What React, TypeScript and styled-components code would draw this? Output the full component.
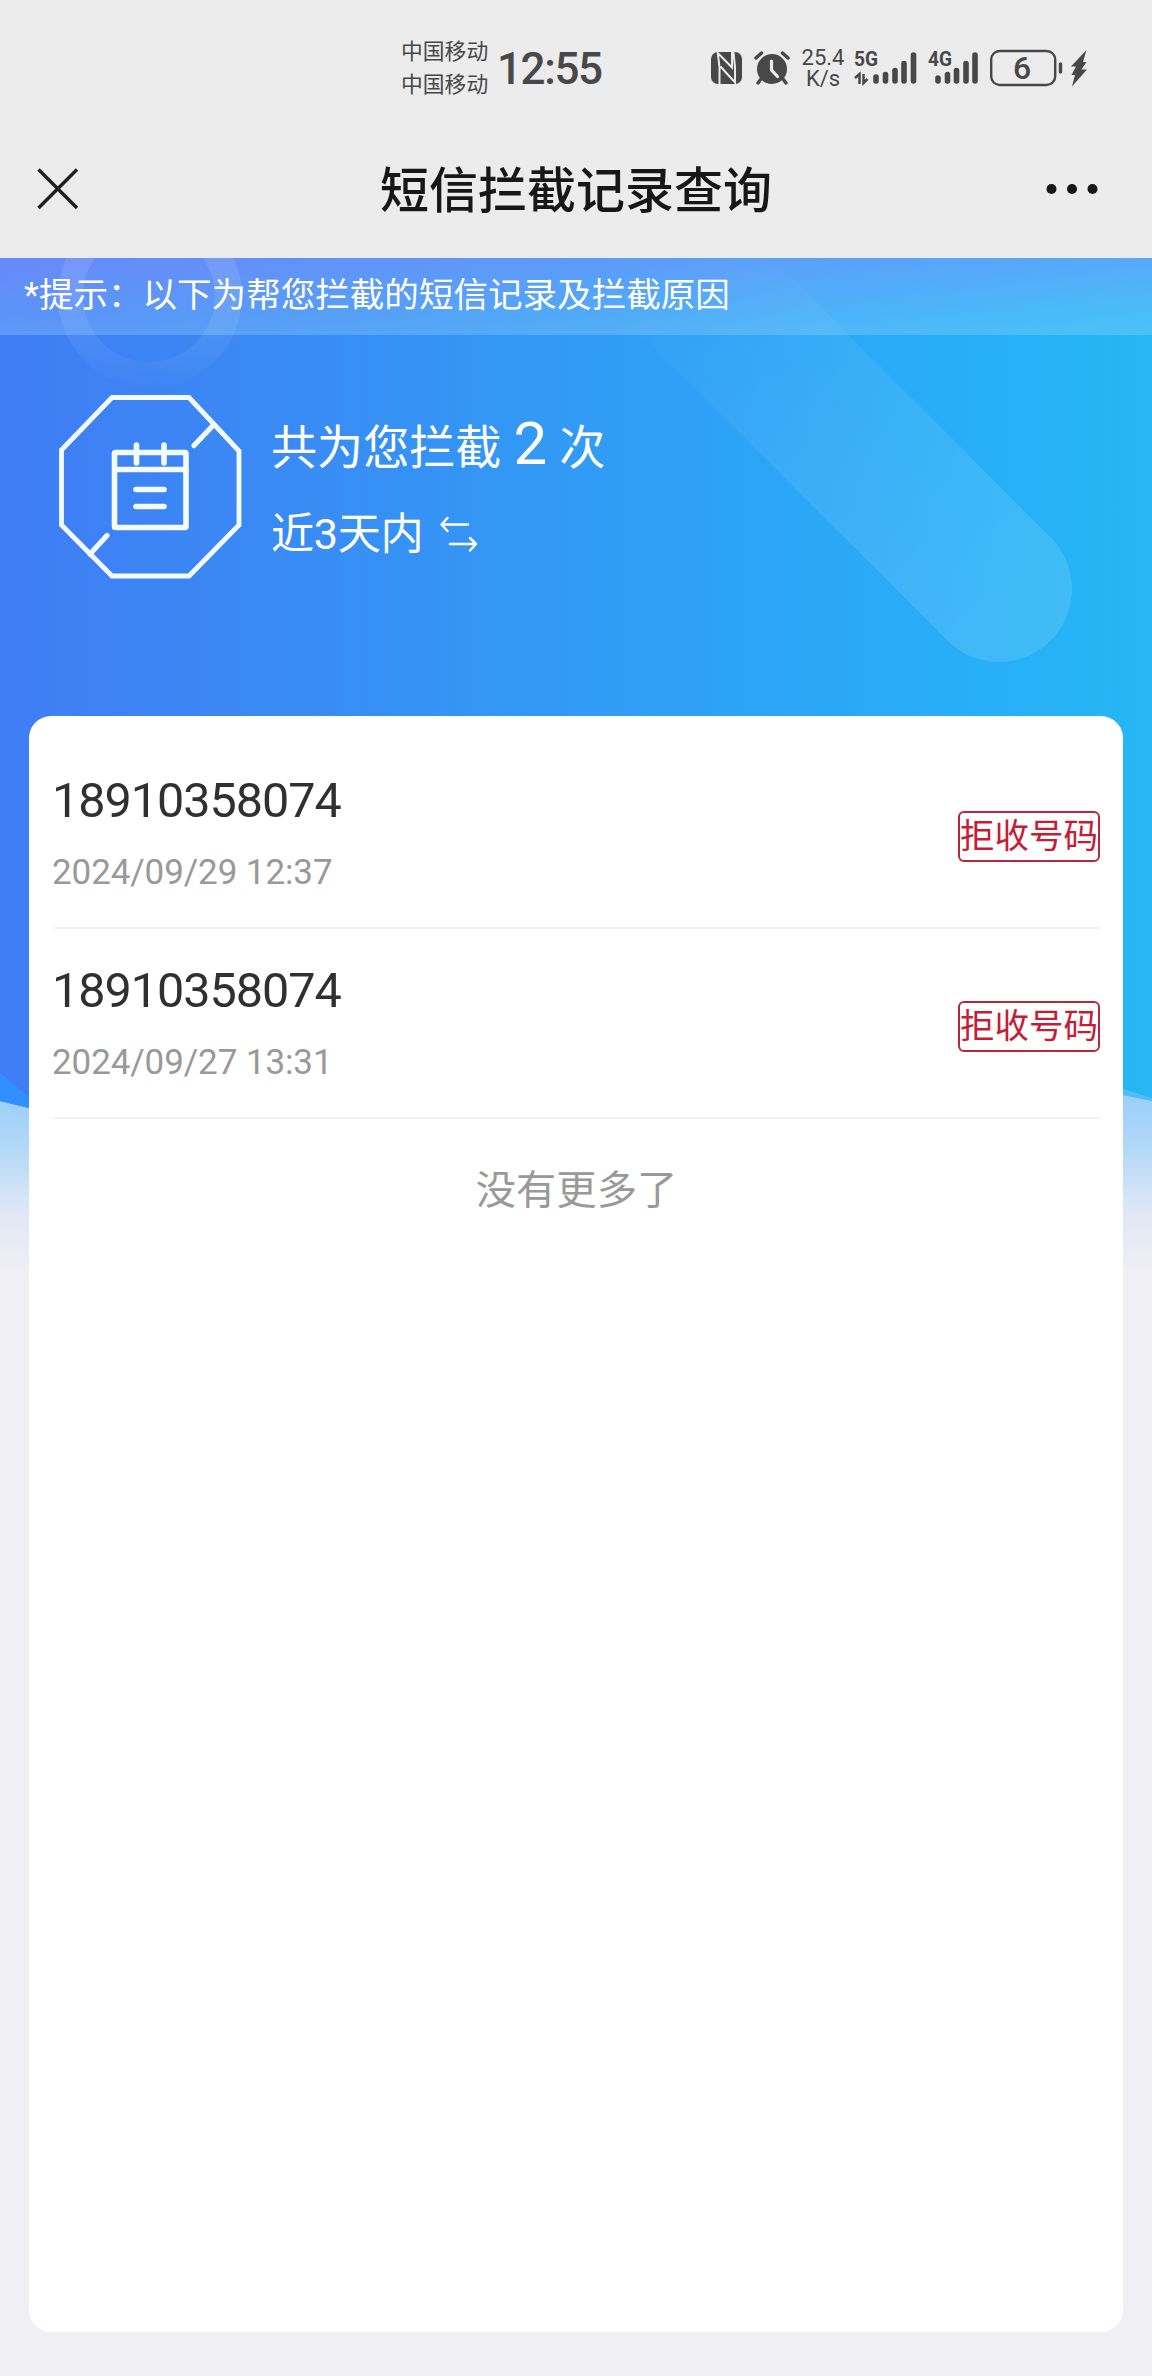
import React from "react";
import styled, { createGlobalStyle } from "styled-components";

const cjk = `"Noto Sans CJK SC", sans-serif`;

const GlobalStyle = createGlobalStyle`
  * { box-sizing: border-box; }
  body { margin: 0; background: #efeff4; font-family: Roboto, ${cjk}; }
`;

const Page = styled.div`
  position: relative;
  width: 1152px;
  height: 2376px;
  overflow: hidden;
  display: flex;
  flex-direction: column;
  background: #efeff4;
`;

const StatusBar = styled.header`
  height: 130px;
  flex: none;
  display: flex;
  align-items: center;
  padding: 5px 60px 0 401px;
  background: #ececec;
  color: #484848;
`;

const Carriers = styled.div`
  display: flex;
  flex: none;
  flex-direction: column;
  width: 96px;
  font-size: 21.8px;
  line-height: 33px;
  white-space: nowrap;
`;

const Clock = styled.div`
  flex: none;
  width: 214px;
  padding-top: 2px;
  font-size: 44px;
  font-weight: 500;
  line-height: 60px;
  letter-spacing: -1.4px;
`;

const StatusGroup = styled.div`
  display: flex;
  flex: none;
  align-items: center;
  gap: 12px;
`;

const StatusIcon = styled.svg`
  display: block;
  flex: none;
  overflow: visible;
`;

const Speed = styled.div`
  flex: none;
  width: 46px;
  margin: 0 -4px 0 -2px;
  padding-top: 2px;
  text-align: center;
  font-size: 22px;
  line-height: 20.5px;
`;

const NavBar = styled.nav`
  height: 128px;
  flex: none;
  display: flex;
  align-items: center;
  justify-content: space-between;
  padding: 0 54px 10px 37px;
  background: #ececec;
`;

const NavSide = styled.div<{ $end?: boolean }>`
  display: flex;
  width: ${(p) => (p.$end ? "103px" : "120px")};
  justify-content: ${(p) => (p.$end ? "flex-end" : "flex-start")};
`;

const Title = styled.h1`
  margin: -5px 0 0;
  font-family: ${cjk};
  font-size: 49px;
  line-height: 72px;
  font-weight: 500;
  color: #171717;
`;

const Backdrop = styled.svg`
  position: absolute;
  left: 0;
  top: 258px;
`;

const Content = styled.main`
  position: relative;
  flex: 1;
  display: flex;
  flex-direction: column;
`;

const Hint = styled.p`
  height: 77px;
  flex: none;
  margin: 0;
  padding: 1px 24px 0;
  font-size: 34.56px;
  line-height: 72px;
  color: #fff;
  background: linear-gradient(rgba(150, 152, 255, 0.45), rgba(180, 215, 255, 0.24) 75%, rgba(175, 225, 255, 0.27));
`;

const Summary = styled.section`
  height: 381px;
  flex: none;
  display: flex;
  gap: 28px;
  padding: 59px 0 0 58px;
  color: #fff;
`;

const SummaryText = styled.div`
  display: flex;
  flex-direction: column;
`;

const Total = styled.div`
  display: flex;
  align-items: baseline;
  height: 94px;
  padding-top: 6px;
  font-size: 46.08px;
  line-height: 88px;
`;

const Count = styled.span`
  margin: 0 12px 0 12px;
  font-size: 60px;
`;

const Range = styled.div`
  display: flex;
  align-items: center;
  height: 94px;
  font-size: 43.2px;
  line-height: 86px;
  letter-spacing: -0.4px;
  gap: 17px;
`;

const Card = styled.section`
  width: 1094px;
  height: 1616px;
  margin: 0 auto;
  padding: 23px 23px 0 24px;
  border-radius: 22px;
  background: #fff;
`;

const Row = styled.article`
  height: 190px;
  display: flex;
  justify-content: space-between;
  border-bottom: 2px solid #f3f3f4;
`;

const Phone = styled.div`
  margin-left: -1px;
  padding-top: 27px;
  font-size: 48.5px;
  line-height: 70px;
  letter-spacing: -1px;
  color: #303030;
`;

const Time = styled.div`
  margin-left: -1px;
  padding-top: 1px;
  font-size: 35px;
  line-height: 72px;
  letter-spacing: -0.1px;
  color: #999;
`;

const Badge = styled.span`
  height: 51px;
  width: 142px;
  margin-top: 72px;
  border: 2px solid #b7283c;
  border-radius: 6px;
  font-family: ${cjk};
  font-size: 34.5px;
  line-height: 40px;
  white-space: nowrap;
  color: #c81c35;
`;

const EndNote = styled.p`
  margin: 40px 0 0;
  text-align: center;
  font-size: 40.32px;
  line-height: 64px;
  color: #999;
`;

const records = [
  { phone: "18910358074", time: "2024/09/29 12:37" },
  { phone: "18910358074", time: "2024/09/27 13:31" },
];

function NfcIcon() {
  return (
    <StatusIcon width="31" height="32" viewBox="0 0 31 32">
      <rect width="31" height="32" rx="7" fill="#484848" />
      <path
        d="M8.500 32V15L6.800 1L21 15.500V0M9.500 14.500L24 30.500V15L22.500 0"
        fill="none"
        stroke="#ececec"
        strokeWidth="2"
      />
    </StatusIcon>
  );
}

function AlarmIcon() {
  return (
    <StatusIcon width="36" height="34" viewBox="0 0 36 34" fill="none" stroke="#484848" strokeLinecap="round">
      <circle cx="18" cy="18" r="15" fill="#484848" stroke="none" />
      <path d="M2 7L7.500 2M28.500 2L34 7M7 28L4 32M29 28L32 32" strokeWidth="3.400" />
      <path d="M17.500 10V19L23.500 25.500" stroke="#ececec" strokeWidth="3.200" />
    </StatusIcon>
  );
}

const NetLabel = styled.text`
  font: 700 21px Roboto, sans-serif;
  fill: #484848;
`;

function Signal5G() {
  return (
    <StatusIcon width="62" height="36" viewBox="0 0 62 36" fill="none" stroke="#484848">
      <NetLabel x="0" y="16" stroke="none" textLength="24" lengthAdjust="spacingAndGlyphs">5G</NetLabel>
      <path d="M22 27V31M31.500 24.500V31M41 20.500V31M50 13.500V31M59.500 5V31" strokeWidth="5.600" strokeLinecap="round" />
      <path d="M1 28L5.500 24V34M9.500 24V33L13.500 29" strokeWidth="2.500" />
    </StatusIcon>
  );
}

function Signal4G() {
  return (
    <StatusIcon width="50" height="36" viewBox="0 0 50 36" fill="none" stroke="#484848">
      <NetLabel x="0" y="16" stroke="none" textLength="24" lengthAdjust="spacingAndGlyphs">4G</NetLabel>
      <path d="M10 28V31M19.500 24.500V31M28.500 20.500V31M38 13.500V31M47 5V31" strokeWidth="5.600" strokeLinecap="round" />
    </StatusIcon>
  );
}

const BatteryLevel = styled.text`
  font: 500 32px Roboto, sans-serif;
  fill: #484848;
`;

function Battery() {
  return (
    <StatusIcon width="98" height="38" viewBox="0 0 98 38">
      <rect x="1.200" y="2" width="64" height="34" rx="8.500" fill="none" stroke="#484848" strokeWidth="2.400" />
      <BatteryLevel x="32" y="29.500" textAnchor="middle">6</BatteryLevel>
      <path d="M70.500 15V23" stroke="#484848" strokeWidth="3.400" strokeLinecap="round" />
      <path d="M96.500 1L81 17.500H86L81.500 26H85L82 37.500L97 20.500H91.500L96.500 13H93Z" fill="#484848" />
    </StatusIcon>
  );
}

function CloseIcon() {
  return (
    <StatusIcon width="42" height="42" viewBox="0 0 42 42">
      <path d="M1.500 1.500L40 40M40 1.500L1.500 40" stroke="#202020" strokeWidth="3.400" />
    </StatusIcon>
  );
}

function MoreIcon() {
  return (
    <StatusIcon width="52" height="12" viewBox="0 0 52 12" fill="#171717">
      <circle cx="5.500" cy="6" r="5" />
      <circle cx="26" cy="6" r="5" />
      <circle cx="46.500" cy="6" r="5" />
    </StatusIcon>
  );
}

function RecordIcon() {
  return (
    <StatusIcon width="185" height="185" viewBox="0 0 185 185" fill="none" stroke="#f4fbff">
      <path d="M54 3.500H131L181 57V131L131 182H54L3.500 131V56Z" strokeWidth="4.800" />
      <path d="M154.500 32L136 51.500M32 160L49 141.500" strokeWidth="5.200" strokeLinecap="round" />
      <rect x="56.500" y="58.500" width="71.500" height="75" rx="1" strokeWidth="5.600" />
      <path d="M57 75.500H128M78.500 51V69M106 51V69M78 95.500H106M78 112.500H106" strokeWidth="5.600" strokeLinecap="round" />
    </StatusIcon>
  );
}

function SwapIcon() {
  return (
    <StatusIcon width="38" height="36" viewBox="0 0 38 36" fill="none" stroke="#fff" strokeWidth="2.500" strokeLinecap="round" strokeLinejoin="round">
      <path d="M28 7.500H1.500M7.500 1L1.500 7.500L7.500 14" />
      <path d="M10 27H36M30 21L36 27L30 33.500" />
    </StatusIcon>
  );
}

function HeroBackdrop() {
  return (
    <Backdrop width="1152" height="1062" viewBox="0 0 1152 1062">
      <defs>
        <linearGradient id="sky">
          <stop offset="0" stopColor="#407df5" />
          <stop offset=".2" stopColor="#3b88f4" />
          <stop offset=".5" stopColor="#319bf5" />
          <stop offset=".85" stopColor="#27aff7" />
          <stop offset="1" stopColor="#26b7f4" />
        </linearGradient>
        <linearGradient id="fade" x1="0" y1="0" x2="0" y2="1">
          <stop offset="0" stopColor="#98cdfa" />
          <stop offset=".3" stopColor="#b0d7f8" />
          <stop offset=".7" stopColor="#e2e8f4" />
          <stop offset="1" stopColor="#efeff4" />
        </linearGradient>
        <linearGradient id="ring" x1="0" y1="0" x2="0" y2="1">
          <stop offset=".25" stopColor="#fff" stopOpacity=".17" />
          <stop offset="1" stopColor="#fff" stopOpacity=".01" />
        </linearGradient>
        <linearGradient id="beam" gradientUnits="userSpaceOnUse" x1="660" y1="-8" x2="1003" y2="335">
          <stop offset="0" stopColor="#fff" stopOpacity="0" />
          <stop offset=".45" stopColor="#fff" stopOpacity=".065" />
          <stop offset="1" stopColor="#fff" stopOpacity=".12" />
        </linearGradient>
      </defs>
      <rect y="830" width="1152" height="185" fill="url(#fade)" />
      <path d="M0 0H1152V843L1123 837H29V850L0 843Z" fill="url(#sky)" />
      <path d="M1123 831L1152 840V843L1123 837Z" fill="#98cdfa" fillOpacity=".35" />
      <path d="M0 815L29 839V850L0 843Z" fill="#318fff" />
      <path
        fillRule="evenodd"
        d="M58 38a92 92 0 1 0 184 0a92 92 0 1 0 -184 0M83 38a66 66 0 1 1 132 0a66 66 0 1 1 -132 0"
        fill="url(#ring)"
      />
      <path d="M564 0L951 386A73 73 0 0 0 1054 283L772 0Z" fill="url(#beam)" />
    </Backdrop>
  );
}

export default function App() {
  return (
    <Page>
      <GlobalStyle />
      <HeroBackdrop />
      <StatusBar>
        <Carriers>
          <span>中国移动</span>
          <span>中国移动</span>
        </Carriers>
        <Clock>12:55</Clock>
        <StatusGroup>
          <NfcIcon />
          <AlarmIcon />
          <Speed>25.4<br />K/s</Speed>
          <Signal5G />
          <Signal4G />
          <Battery />
        </StatusGroup>
      </StatusBar>
      <NavBar>
        <NavSide><CloseIcon /></NavSide>
        <Title>短信拦截记录查询</Title>
        <NavSide $end><MoreIcon /></NavSide>
      </NavBar>
      <Content>
        <Hint>*提示：以下为帮您拦截的短信记录及拦截原因</Hint>
        <Summary>
          <RecordIcon />
          <SummaryText>
            <Total>共为您拦截<Count>2</Count>次</Total>
            <Range>近3天内<SwapIcon /></Range>
          </SummaryText>
        </Summary>
        <Card>
          {records.map((r) => (
            <Row key={r.time}>
              <div>
                <Phone>{r.phone}</Phone>
                <Time>{r.time}</Time>
              </div>
              <Badge>拒收号码</Badge>
            </Row>
          ))}
          <EndNote>没有更多了</EndNote>
        </Card>
      </Content>
    </Page>
  );
}
